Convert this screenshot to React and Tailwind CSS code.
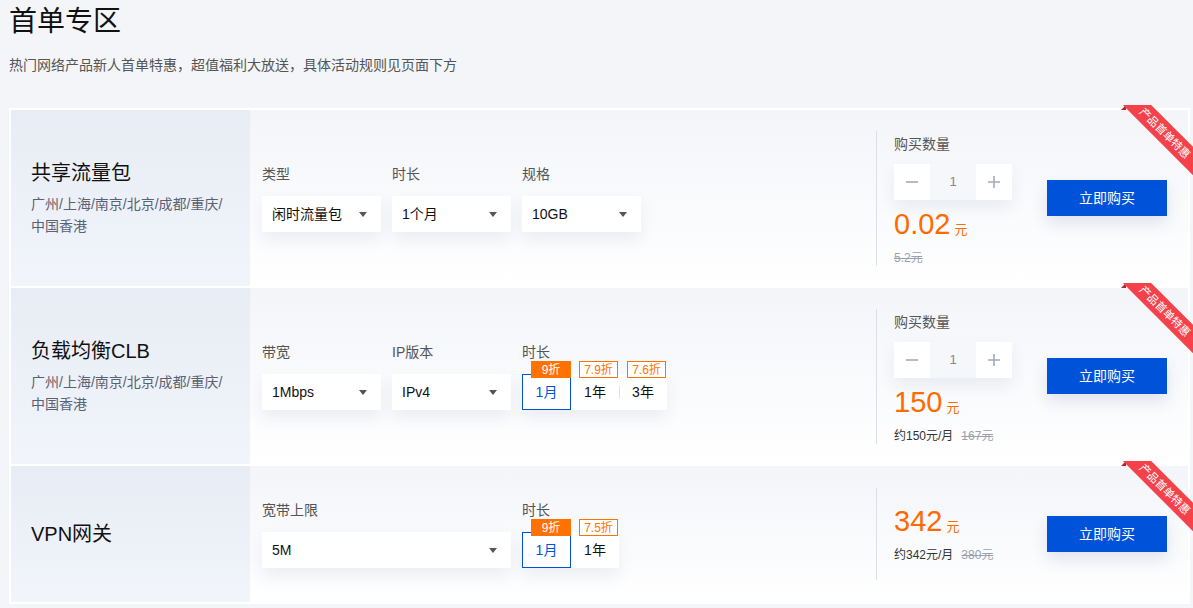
const FONT = "font-['Liberation_Sans','Noto_Sans_CJK_SC',sans-serif]";

function Select({ value, w }) {
  return (
    <div
      className={`flex h-9 items-center justify-between bg-white pl-[10px] pr-[14px] text-sm text-[#111] shadow-[0_8px_16px_rgba(40,60,120,0.08)] ${w}`}
    >
      <span>{value}</span>
      <span className="h-0 w-0 border-x-[4px] border-t-[5px] border-x-transparent border-t-[#555]" />
    </div>
  );
}

function Field({ label, children }) {
  return (
    <div className="flex flex-col">
      <div className="mb-3 h-5 text-sm leading-5 text-[#555]">{label}</div>
      {children}
    </div>
  );
}

function Durations({ opts }) {
  return (
    <div className="flex bg-white shadow-[0_8px_16px_rgba(40,60,120,0.08)]">
      {opts.map((o, i) => (
        <div
          key={o.label}
          className={
            i === 0
              ? "relative flex h-9 w-[49px] items-center justify-center border border-[#0052d9] text-sm text-[#0052d9]"
              : "relative flex h-9 w-[48px] items-center justify-center text-sm text-[#111]"
          }
        >
          {i > 1 && <span className="absolute left-0 top-[12px] h-3 w-px bg-[#dcdfe6]" />}
          {o.label}
          {i === 0 ? (
            <span className="absolute right-[-1px] top-[-14px] flex h-[17px] w-[40px] items-center justify-center bg-[#ff7200] text-xs text-white">
              {o.off}
            </span>
          ) : (
            <span className="absolute right-[1px] top-[-13px] flex h-[17px] w-[39px] items-center justify-center border border-[#ff7200] bg-white text-xs text-[#ff7200]">
              {o.off}
            </span>
          )}
        </div>
      ))}
    </div>
  );
}

function Stepper() {
  return (
    <div className="flex h-9 w-[118px] shadow-[0_8px_16px_rgba(40,60,120,0.08)]">
      <div className="flex w-9 items-center justify-center bg-white">
        <svg width="16" height="16" viewBox="0 0 16 16">
          <path d="M2 8h12" stroke="#a3abb9" strokeWidth="1.6" />
        </svg>
      </div>
      <div className="flex w-[46px] items-center justify-center bg-[#f6f7fa] text-[13px] text-[#888]">1</div>
      <div className="flex w-9 items-center justify-center bg-white">
        <svg width="16" height="16" viewBox="0 0 16 16">
          <path d="M2 8h12M8 2v12" stroke="#a3abb9" strokeWidth="1.6" />
        </svg>
      </div>
    </div>
  );
}

function Ribbon() {
  return (
    <>
      {/* fold shadows */}
      <span className="absolute right-[62px] top-[-5px] h-0 w-0 border-b-[5px] border-l-[5px] border-b-[#b3262c] border-l-transparent" />
      <span className="absolute right-[-5px] top-[55px] h-0 w-0 border-r-[5px] border-t-[5px] border-r-transparent border-t-[#b3262c]" />
      <div className="pointer-events-none absolute right-[-5px] top-[-5px] h-[75px] w-[75px] overflow-hidden">
        <div className="absolute left-[-8px] top-[18px] flex h-[20px] w-[110px] rotate-45 items-center justify-center bg-[#f5424a] text-[11px] leading-none text-white">
          产品首单特惠
        </div>
      </div>
    </>
  );
}

function Price({ value, sub, old }) {
  return (
    <>
      <div className="flex items-baseline leading-8 text-[#ff6a00]">
        <span className="text-[29px]">{value}</span>
        <span className="ml-1 text-[13px]">元</span>
      </div>
      <div className="mt-1 flex h-4 items-center text-xs">
        {sub && <span className="mr-2 text-[#333]">{sub}</span>}
        <span className="text-[#9aa1ae] line-through">{old}</span>
      </div>
    </>
  );
}

function Row({ title, regions, height, children, qty, price, dividerPad }) {
  return (
    <div className={`relative flex ${height}`}>
      <div className="flex w-[239px] shrink-0 flex-col justify-center bg-gradient-to-b from-[#e8ecf4] to-[#f1f4fb] pl-5">
        <div className="text-xl leading-7 text-[#111]">{title}</div>
        {regions && (
          <div className="mt-[6px] text-sm leading-[22px] text-[#5a6172]">
            广州/上海/南京/北京/成都/重庆/
            <br />
            中国香港
          </div>
        )}
      </div>
      <div className="flex flex-1 items-center bg-gradient-to-b from-[#f3f5f9] to-white">
        <div className="flex flex-1 gap-[11px] pl-3">{children}</div>
        <div className="flex w-[312px] shrink-0 items-center">
          <div className={`w-[171px] border-l border-[#dcdfe6] pl-[17px] ${dividerPad}`}>
            {qty && (
              <>
                <div className="mt-[3px] h-5 text-sm leading-5 text-[#555]">购买数量</div>
                <div className="mb-2 mt-[10px]">
                  <Stepper />
                </div>
              </>
            )}
            {price}
          </div>
          <button className="h-9 w-[120px] bg-[#0052d9] text-sm text-white shadow-[0_8px_16px_rgba(40,60,140,0.12)]">
            立即购买
          </button>
        </div>
      </div>
      <Ribbon />
    </div>
  );
}

export default function App() {
  return (
    <div className={`min-h-screen bg-[#f3f5f9] ${FONT}`}>
      <div className="px-[9px] pt-1">
        <h1 className="text-[28px] leading-9 text-[#111]">首单专区</h1>
        <p className="mt-[15px] text-sm leading-5 text-[#555]">
          热门网络产品新人首单特惠，超值福利大放送，具体活动规则见页面下方
        </p>
      </div>
      <div className="ml-[9px] mt-[33px] flex w-[1181px] flex-col gap-[2px] border-2 border-white bg-white">
        <Row
          title="共享流量包"
          regions
          height="h-[176px]"
          qty
          price={<Price value="0.02" old="5.2元" />}
        >
          <Field label="类型">
            <Select value="闲时流量包" w="w-[119px]" />
          </Field>
          <Field label="时长">
            <Select value="1个月" w="w-[119px]" />
          </Field>
          <Field label="规格">
            <Select value="10GB" w="w-[119px]" />
          </Field>
        </Row>
        <Row
          title="负载均衡CLB"
          regions
          height="h-[176px]"
          qty
          price={<Price value="150" sub="约150元/月" old="167元" />}
        >
          <Field label="带宽">
            <Select value="1Mbps" w="w-[119px]" />
          </Field>
          <Field label="IP版本">
            <Select value="IPv4" w="w-[119px]" />
          </Field>
          <Field label="时长">
            <Durations
              opts={[
                { label: "1月", off: "9折" },
                { label: "1年", off: "7.9折" },
                { label: "3年", off: "7.6折" },
              ]}
            />
          </Field>
        </Row>
        <Row
          title="VPN网关"
          height="h-[136px]"
          dividerPad="py-[17px]"
          price={<Price value="342" sub="约342元/月" old="380元" />}
        >
          <Field label="宽带上限">
            <Select value="5M" w="w-[249px]" />
          </Field>
          <Field label="时长">
            <Durations
              opts={[
                { label: "1月", off: "9折" },
                { label: "1年", off: "7.5折" },
              ]}
            />
          </Field>
        </Row>
      </div>
    </div>
  );
}
